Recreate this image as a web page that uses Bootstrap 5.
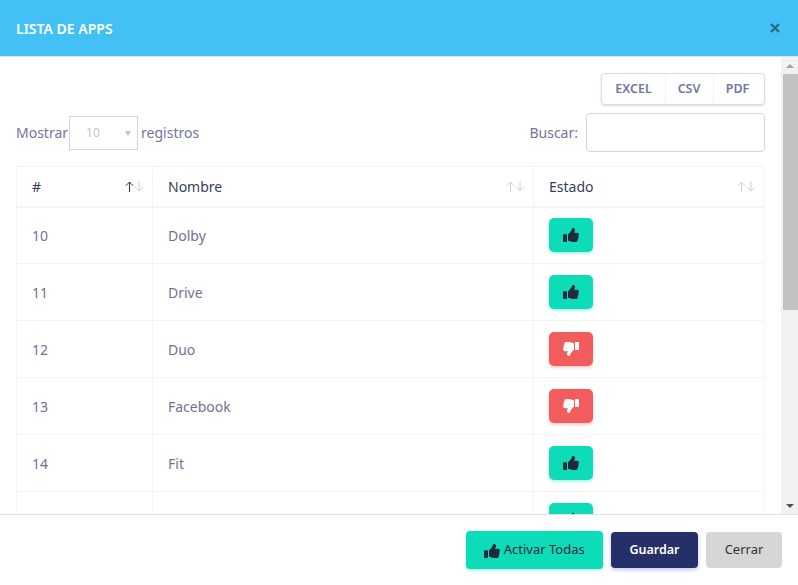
<!DOCTYPE html>
<html lang="es">
<head>
    <meta charset="UTF-8">
    <title>Lista de apps</title>
    <link href="https://cdn.jsdelivr.net/npm/bootstrap@5.3.0/dist/css/bootstrap.min.css" rel="stylesheet">
    <style>
        html, body {
            height: 100%;
            margin: 0;
            overflow: hidden;
            font-family: "Noto Sans", "Open Sans", sans-serif;
            font-size: 14px;
            color: #74749a;
            background: #fff;
        }

        .app-modal {
            height: 585px;
            border: 0;
            border-radius: 0;
            display: flex;
            flex-direction: column;
        }

        .app-head {
            flex: 0 0 57px;
            background: #43c1f5;
            border-bottom: 1px solid #e0e3e6;
            border-radius: 0;
            padding: 0 16px;
        }

        .app-head h5 {
            font-size: 14px;
            font-weight: 600;
            color: #fff;
            margin: 0;
        }

        .close-x {
            color: #2f6280;
            line-height: 0;
            margin-right: 2px;
        }

        .body-wrap {
            flex: 1 1 auto;
            min-height: 0;
        }

        .app-body {
            flex: 1 1 auto;
            min-width: 0;
            overflow: hidden;
            padding: 16px 16px 0;
        }

        /* headless browser hides the native bar, so it is drawn here */
        .scroll-rail {
            flex: 0 0 17px;
            background: #f1f1f1;
        }

        .rail-btn {
            flex: 0 0 17px;
        }

        .rail-up {
            border-left: 4px solid transparent;
            border-right: 4px solid transparent;
            border-bottom: 4px solid #a3a3a3;
        }

        .rail-down {
            border-left: 4px solid transparent;
            border-right: 4px solid transparent;
            border-top: 4px solid #505050;
        }

        .rail-thumb {
            height: 236px;
            margin-left: 2px;
            background: #c1c1c1;
        }

        .rail-rest {
            flex: 1 1 auto;
        }

        .export-group {
            width: 164px;
            height: 32px;
            border: 1px solid #dcdce4;
            border-radius: 4px;
            box-shadow: 0 1px 2px rgba(60, 60, 100, .2);
        }

        .export-group .btn {
            flex: 0 0 auto;
            font-size: 12.500px;
            font-weight: 600;
            color: #74749a;
            padding: 0;
            margin: 0;
            border: 0;
            border-right: 1px solid #f3f3f6;
            border-radius: 0;
            height: 30px;
        }

        .export-group .btn:last-child {
            border-right: 0;
        }

        .export-group .btn-excel { width: 64px; }
        .export-group .btn-csv { width: 49px; }
        .export-group .btn-pdf { width: 49px; }

        .filter-row {
            margin-top: 8px;
            height: 39px;
        }

        .len-select {
            width: 69px;
            height: 34px;
            margin: 0 3px 0 1px;
            border: 1px solid #d3d5dd;
            color: #c4c4c4;
            font-size: 12px;
            padding-left: 16px;
            position: relative;
        }

        .len-caret {
            position: absolute;
            right: 6px;
            top: 14px;
            border-left: 3px solid transparent;
            border-right: 3px solid transparent;
            border-top: 5px solid #c4c4c4;
        }

        .search-box {
            width: 179px;
            height: 39px;
            margin-left: 8px;
            border: 1px solid #d3d5dd;
            border-radius: 4px;
        }

        .apps-table {
            margin: 14px 0 0;
            width: 100%;
            table-layout: fixed;
            border-collapse: collapse;
            border: 1px solid #f1f5f8;
            font-size: 14px;
        }

        .apps-table th,
        .apps-table td {
            border: 0;
            border-right: 1px solid #f1f5f8;
            border-bottom: 1px solid #f1f5f8;
            padding: 0 0 0 15px;
            vertical-align: middle;
            box-shadow: none;
        }

        .apps-table th {
            height: 40px;
            font-weight: 400;
            color: #36405c;
            border-bottom-width: 2px;
            position: relative;
        }

        .apps-table td {
            height: 57px;
            color: #72728f;
        }

        .col-num { width: 136px; }
        .col-name { width: 381px; }

        .sort-mark {
            position: absolute;
            right: 9px;
            top: 14px;
            line-height: 0;
            color: #cdd1d8;
        }

        .sort-first {
            color: #2b3553;
        }

        .state-btn {
            width: 44px;
            height: 34px;
            padding: 0;
            border: 0;
            border-radius: 5px;
            line-height: 0;
        }

        .state-on {
            background: #0cdcb8;
            color: #1f2a3a;
            box-shadow: 0 2px 3px rgba(12, 220, 184, .3);
        }

        .state-off {
            background: #f25c5c;
            color: #fff;
            box-shadow: 0 2px 3px rgba(242, 92, 92, .3);
        }

        .app-foot {
            flex: 0 0 71px;
            border-top: 1px solid #dfe1e5;
            border-radius: 0;
            padding: 0 16px 0 0;
            gap: 8px;
            margin: 0;
        }

        .app-foot .btn {
            margin: 0;
            height: 36px;
            padding: 0;
            font-size: 13px;
            border: 0;
            border-radius: 4px;
        }

        .app-foot .btn-all {
            width: 137px;
            height: 38px;
            background: #0cdcb8;
            color: #1f2a3a;
            box-shadow: 0 2px 3px rgba(12, 220, 184, .3);
        }

        .app-foot .btn-save {
            width: 87px;
            background: #252f68;
            color: #fff;
            font-size: 12.500px;
            font-weight: 600;
            box-shadow: 0 2px 4px rgba(60, 70, 200, .3);
        }

        .btn-close-app {
            width: 76px;
            background: #d6d6d6;
            color: #333;
        }
    </style>
</head>
<body>

    <svg class="d-none">
        <symbol id="thumb" viewBox="0 0 512 512" preserveAspectRatio="none">
            <path fill="currentColor" d="M104 224H24c-13.255 0-24 10.745-24 24v240c0 13.255 10.745 24 24 24h80c13.255 0 24-10.745 24-24V248c0-13.255-10.745-24-24-24zM384 81.452c0 42.416-25.97 66.208-33.277 94.548h101.723c33.397 0 59.397 27.746 59.553 58.098.084 17.938-7.546 37.249-19.439 49.197l-.11.11c9.836 23.337 8.237 56.037-9.308 79.469 8.681 25.895-.069 57.704-16.382 74.757 4.298 17.598 2.244 32.575-6.148 44.632C440.202 511.587 389.616 512 346.839 512l-2.845-.001c-48.287-.017-87.806-17.598-119.56-31.725-15.957-7.099-36.821-15.887-52.651-16.178-6.54-.12-11.783-5.457-11.783-11.998v-213.77c0-3.2 1.282-6.271 3.558-8.521 39.614-39.144 56.648-80.587 89.117-113.111 14.804-14.832 20.188-37.236 25.393-58.902C282.515 39.293 291.817 0 312 0c24 0 72 8 72 81.452z"/>
        </symbol>
    </svg>

    <div class="modal-content app-modal">
        <div class="modal-header app-head">
            <h5 class="modal-title">LISTA DE APPS</h5>
            <span class="close-x ms-auto">
                <svg width="10" height="10" viewBox="0 0 10 10"><path stroke="currentColor" stroke-width="2.200" d="M1 1l8 8M9 1 1 9"/></svg>
            </span>
        </div>

        <div class="d-flex body-wrap">
            <div class="modal-body app-body">
                <div class="d-flex justify-content-end">
                    <div class="btn-group export-group">
                        <button class="btn btn-excel">EXCEL</button>
                        <button class="btn btn-csv">CSV</button>
                        <button class="btn btn-pdf">PDF</button>
                    </div>
                </div>

                <div class="d-flex align-items-center justify-content-between filter-row">
                    <div class="d-flex align-items-center">
                        Mostrar
                        <div class="len-select d-flex align-items-center">10<span class="len-caret"></span></div>
                        registros
                    </div>
                    <div class="d-flex align-items-center">
                        Buscar:
                        <div class="search-box"></div>
                    </div>
                </div>

                <table class="table apps-table">
                    <thead>
                        <tr>
                            <th class="col-num">#
                                <span class="sort-mark">
                                    <svg width="18" height="11" viewBox="0 0 18 11" fill="none" stroke="currentColor">
                                        <path class="sort-first" d="M4.500 11V1M.8 4.800 4.500 1l3.700 3.800"/>
                                        <path d="M14 0v10M10.300 6.200 14 10l3.700-3.800"/>
                                    </svg>
                                </span>
                            </th>
                            <th class="col-name">Nombre
                                <span class="sort-mark">
                                    <svg width="18" height="11" viewBox="0 0 18 11" fill="none" stroke="currentColor">
                                        <path d="M4.500 11V1M.8 4.800 4.500 1l3.700 3.800"/>
                                        <path d="M14 0v10M10.300 6.200 14 10l3.700-3.800"/>
                                    </svg>
                                </span>
                            </th>
                            <th>Estado
                                <span class="sort-mark">
                                    <svg width="18" height="11" viewBox="0 0 18 11" fill="none" stroke="currentColor">
                                        <path d="M4.500 11V1M.8 4.800 4.500 1l3.700 3.800"/>
                                        <path d="M14 0v10M10.300 6.200 14 10l3.700-3.800"/>
                                    </svg>
                                </span>
                            </th>
                        </tr>
                    </thead>
                    <tbody id="apps-rows"></tbody>
                </table>
            </div>

            <div class="scroll-rail d-flex flex-column align-items-stretch">
                <div class="rail-btn d-flex align-items-center justify-content-center"><span class="rail-up"></span></div>
                <div class="rail-thumb"></div>
                <div class="rail-rest"></div>
                <div class="rail-btn d-flex align-items-center justify-content-center"><span class="rail-down"></span></div>
            </div>
        </div>

        <div class="modal-footer app-foot">
            <button class="btn btn-all">
                <svg width="16" height="14" class="align-text-bottom"><use href="#thumb"/></svg> Activar Todas
            </button>
            <button class="btn btn-save">Guardar</button>
            <button class="btn btn-close-app">Cerrar</button>
        </div>
    </div>

    <script>
        // the sixth row only peeks out above the footer, its texts are out of view
        const apps = [
            ['10', 'Dolby', true],
            ['11', 'Drive', true],
            ['12', 'Duo', false],
            ['13', 'Facebook', false],
            ['14', 'Fit', true],
            ['', '', true]
        ];

        document.getElementById('apps-rows').innerHTML = apps.map(([id, name, active]) => `
            <tr>
                <td>${id}</td>
                <td>${name}</td>
                <td>
                    <button class="btn state-btn ${active ? 'state-on' : 'state-off'}">
                        <svg width="16" height="14" ${active ? '' : 'transform="rotate(180)"'}><use href="#thumb"/></svg>
                    </button>
                </td>
            </tr>`).join('');
    </script>

    <script src="https://cdn.jsdelivr.net/npm/bootstrap@5.3.0/dist/js/bootstrap.bundle.min.js"></script>
</body>
</html>
